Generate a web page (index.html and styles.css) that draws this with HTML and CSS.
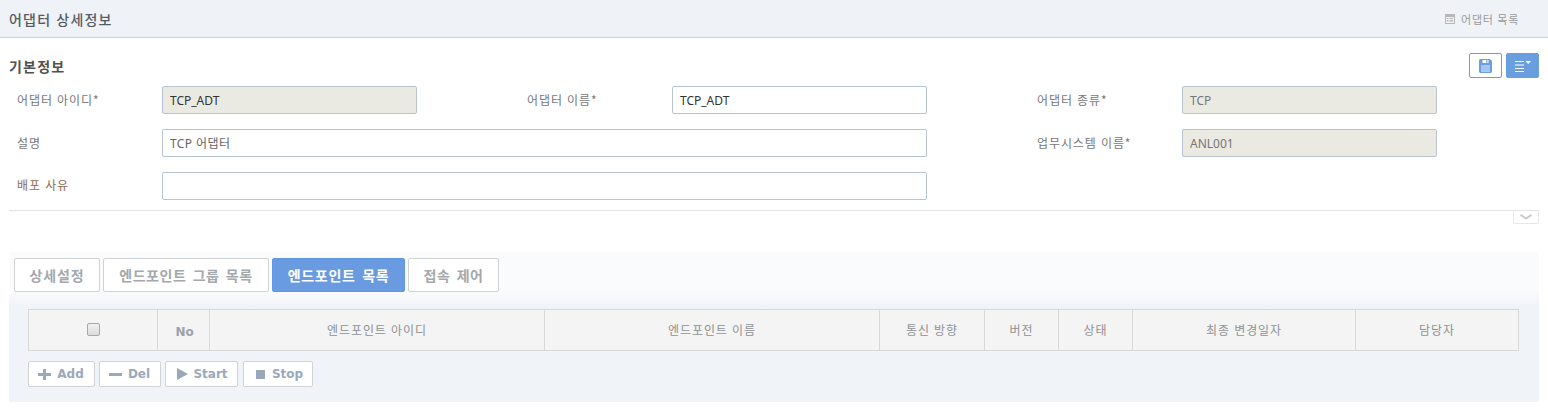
FILE: index.html
```html
<!DOCTYPE html>
<html lang="ko">
<head>
<meta charset="utf-8">
<title>어댑터 상세정보</title>
<link rel="stylesheet" href="styles.css">
</head>
<body>
<header class="page-head">
  <h1 class="page-title">어댑터 상세정보</h1>
  <a class="list-link">
    <svg class="list-icon" width="10" height="10" viewBox="0 0 10 10"><path fill="#b8b8b8" fill-rule="evenodd" d="M0 0h10v10H0zM1 3v6h8V3zM2 4h1.500v1H2zM4.500 4H8v1H4.500zM2 6h1.500v1.500H2zM4.500 6H8v1.500H4.500z"/></svg>
    <span>어댑터 목록</span>
  </a>
</header>

<section class="info">
  <div class="info-head">
    <h2 class="info-title">기본정보</h2>
    <div class="info-actions">
      <button class="icon-btn outline" type="button" aria-label="저장">
        <svg width="13" height="14" viewBox="0 0 13 14"><path fill="#6a9fdf" fill-rule="evenodd" d="M1 0h10l2 2v11l-1 1H1l-1-1V1zM3.500 1v3h6V1zM2 6v6.500h9V6z"/><rect x="7" y="1.500" width="1.500" height="2" fill="#6a9fdf"/><rect x="2" y="6" width="9" height="6.500" fill="#a6c5ec"/></svg>
      </button>
      <button class="icon-btn solid" type="button" aria-label="메뉴">
        <svg width="16" height="12" viewBox="0 0 16 12"><path fill="#fff" d="M0 1h9v1H0zM0 4.500h9v1H0zM0 8h9v1H0zM0 11h9v1H0zM10.500 1h5.500l-2.750 3z"/></svg>
      </button>
    </div>
  </div>
  <div class="form-grid">
    <label class="lbl">어댑터 아이디*</label>
    <input class="field ro" value="TCP_ADT" readonly>
    <label class="lbl col2">어댑터 이름*</label>
    <input class="field dark" value="TCP_ADT">
    <label class="lbl col3">어댑터 종류*</label>
    <input class="field ro muted" value="TCP" readonly>

    <label class="lbl">설명</label>
    <input class="field span3 ko" value="TCP 어댑터">
    <label class="lbl col3">업무시스템 이름*</label>
    <input class="field ro muted" value="ANL001" readonly>

    <label class="lbl req">배포 사유</label>
    <input class="field span3" value="">
  </div>
  <div class="divider">
    <span class="collapse">
      <svg width="12" height="6" viewBox="0 0 12 6"><path fill="none" stroke="#cccccc" stroke-width="2" d="M.5 .8L6 4.500 11.500 .8"/></svg>
    </span>
  </div>
</section>

<section class="panel">
  <nav class="tabs">
    <a class="tab t1">상세설정</a>
    <a class="tab t2">엔드포인트 그룹 목록</a>
    <a class="tab t3 active">엔드포인트 목록</a>
    <a class="tab t4">접속 제어</a>
  </nav>
  <table class="grid">
    <colgroup>
      <col class="c1"><col class="c2"><col class="c3"><col class="c4"><col class="c5"><col class="c6"><col class="c7"><col class="c8"><col class="c9">
    </colgroup>
    <thead>
      <tr>
        <th><input class="check" type="checkbox"></th>
        <th class="no">No</th>
        <th>엔드포인트 아이디</th>
        <th>엔드포인트 이름</th>
        <th>통신 방향</th>
        <th>버전</th>
        <th>상태</th>
        <th>최종 변경일자</th>
        <th>담당자</th>
      </tr>
    </thead>
  </table>
  <div class="actions">
    <button class="act a1" type="button"><svg width="13" height="11" viewBox="0 0 13 11"><path fill="#9aa8b9" d="M5 0h3v4h5v3H8v4H5V7H0V4h5z"/></svg>Add</button>
    <button class="act a2" type="button"><svg width="13" height="3" viewBox="0 0 13 3"><path fill="#9aa8b9" d="M0 0h13v3H0z"/></svg>Del</button>
    <button class="act a3" type="button"><svg width="11" height="12" viewBox="0 0 11 12"><path fill="#9aa8b9" d="M0 0l11 6-11 6z"/></svg>Start</button>
    <button class="act a4" type="button"><svg width="9" height="9" viewBox="0 0 9 9"><path fill="#9aa8b9" d="M0 0h9v9H0z"/></svg>Stop</button>
  </div>
</section>
</body>
</html>
```
FILE: styles.css
```css
* { box-sizing: border-box; }
html, body { margin: 0; padding: 0; }
body {
  width: 1548px;
  height: 410px;
  overflow: hidden;
  background: #fff;
  font-family: "Noto Sans CJK KR", "Noto Sans", sans-serif;
  font-size: 12px;
  color: #555;
}
.page-head {
  height: 38px;
  background: #eff3f8;
  border-bottom: 1px solid #c9d0da;
  display: flex;
  align-items: center;
  justify-content: space-between;
  padding: 0 29px 0 9px;
}
.page-title {
  margin: 0;
  font-size: 14px;
  font-weight: 500;
  letter-spacing: 1.2px;
  color: #555b64;
}
.list-link {
  display: flex;
  align-items: center;
  gap: 6px;
  font-size: 11px;
  letter-spacing: .7px;
  color: #9a9a9a;
}
.info { padding: 15px 9px 0; }
.info-head {
  height: 25px;
  display: flex;
  align-items: center;
  justify-content: space-between;
  margin-bottom: 8px;
}
.info-title {
  margin: 1px 0 0;
  font-size: 14px;
  font-weight: 700;
  letter-spacing: 1.2px;
  color: #505050;
}
.info-actions { display: flex; gap: 4px; }
.icon-btn {
  width: 33px;
  height: 25px;
  padding: 0;
  border-radius: 2px;
  display: flex;
  align-items: center;
  justify-content: center;
}
.icon-btn.outline { background: #fff; border: 1px solid #6a9fdf; }
.icon-btn.solid { background: #6a9fdf; border: 1px solid #6a9fdf; }
.form-grid {
  display: grid;
  grid-template-columns: 145px 255px 110px 145px 255px 110px 145px 255px;
  grid-auto-rows: 28px;
  row-gap: 15px;
  padding-left: 8px;
  align-items: center;
}
.lbl { font-size: 12px; letter-spacing: .9px; color: #777; margin-bottom: 2px; }
.lbl.req { color: #8d6a52; margin-bottom: 4px; }
.col2 { grid-column: 4; }
.col3 { grid-column: 7; }
.span3 { grid-column: 2 / span 4; }
.field {
  height: 28px;
  width: 100%;
  border: 1px solid #b9c4d2;
  border-radius: 2px;
  background: #fff;
  padding: 0 7px;
  font-family: "Noto Sans", "Noto Sans CJK KR", sans-serif;
  font-size: 12px;
  color: #555;
  outline: none;
}
.field.ko { letter-spacing: .4px; color: #666; }
.field.dark { color: #333; }
.field.ro { background: #eaeae3; color: #333; }
.field.ro.muted { color: #777; }
.divider {
  margin-top: 10px;
  height: 14px;
  border-top: 1px solid #e3e3e3;
  display: flex;
  justify-content: flex-end;
}
.collapse {
  width: 26px;
  height: 13px;
  border: 1px solid #e8e8e8;
  border-top: 0;
  border-radius: 0 0 2px 2px;
  display: flex;
  align-items: center;
  justify-content: center;
}
.panel {
  margin: 28px 9px 0;
  height: 150px;
  padding: 6px 20px 0 19px;
  border-radius: 2px;
  background: linear-gradient(#fafbfc 0, #fafbfc 40px, #f0f3f7 55px, #f0f3f7 100%);
}
.tabs { display: flex; gap: 3px; margin-left: -14px; }
.tab {
  height: 34px;
  display: flex;
  align-items: center;
  justify-content: center;
  border: 1px solid #d2d2d2;
  border-radius: 2px;
  background: #fff;
  color: #a5a8ac;
  font-size: 14px;
  font-weight: 700;
  word-spacing: 2px;
  letter-spacing: .5px;
}
.t1 { width: 86px; letter-spacing: .9px; }
.t2 { width: 166px; }
.t3 { width: 133px; letter-spacing: .7px; }
.t4 { width: 91px; }
.tab.active { background: #6a9ae0; border-color: #5f98ea; color: #fff; }
.grid {
  margin-top: 17px;
  width: 1490px;
  table-layout: fixed;
  border-collapse: collapse;
  background: #f4f4f4;
}
.c1 { width: 129px; }
.c2 { width: 52px; }
.c3 { width: 335px; }
.c4 { width: 335px; }
.c5 { width: 105px; }
.c6 { width: 74px; }
.c7 { width: 74px; }
.c8 { width: 223px; }
.c9 { width: 163px; }
.grid th {
  height: 41px;
  padding: 0 0 2px;
  border: 1px solid #d8d8d8;
  font-size: 12px;
  font-weight: 400;
  letter-spacing: .9px;
  color: #8f9295;
  vertical-align: middle;
}
.grid th.no {
  font-family: "DejaVu Sans", sans-serif;
  font-weight: 700;
  font-size: 12px;
  letter-spacing: -.2px;
  padding: 3px 0 0 2px;
  color: #9aa1ab;
}
.check {
  appearance: none;
  margin: 0 0 2px;
  width: 13px;
  height: 13px;
  vertical-align: middle;
  border: 1px solid #a8a8a8;
  border-radius: 2px;
  background: linear-gradient(#f0f0f0, #dcdcdc);
}
.actions { display: flex; margin-top: 10px; }
.act {
  height: 26px;
  display: flex;
  align-items: center;
  justify-content: center;
  gap: 6px;
  padding: 0;
  border: 1px solid #d2d2d2;
  border-radius: 2px;
  background: #fff;
  font-family: "DejaVu Sans", sans-serif;
  font-size: 12px;
  font-weight: 700;
  color: #9aa8bc;
}
.a1 { width: 67px; margin-right: 4px; padding-right: 1px; }
.a2 { width: 62px; margin-right: 4px; padding-right: 1px; }
.a3 { width: 73px; margin-right: 5px; gap: 5px; padding-left: 2px; }
.a4 { width: 70px; gap: 7px; padding-left: 3px; }
```
